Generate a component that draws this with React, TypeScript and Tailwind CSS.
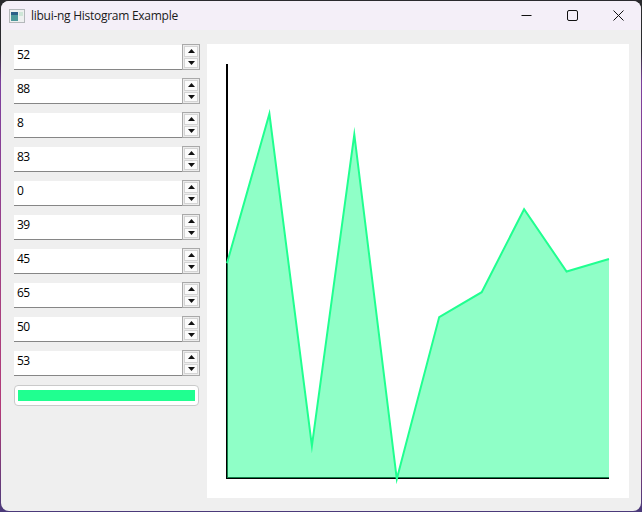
import React from 'react';

const VALUES = [52, 88, 8, 83, 0, 39, 45, 65, 50, 53];

// chart coordinates are local to the white panel (panel starts at 207,44)
const points = VALUES.map((v, i) => {
  const x = 20 + (i * 382) / 9;
  const y = 435 - v * 4.15;
  return `${x.toFixed(1)},${y.toFixed(1)}`;
});

function Arrow({ down }: { down?: boolean }) {
  return (
    <svg width="7" height="4" viewBox="0 0 7 4" className="block">
      <polygon points={down ? '0,0 7,0 3.5,4' : '3.5,0 7,4 0,4'} fill="#111" />
    </svg>
  );
}

function Spinner({ value }: { value: number }) {
  return (
    <div className="flex h-[26px]">
      <div className="flex-1 mt-px bg-white border-b border-[#868686] pl-[3px] text-[12px] tracking-[-0.7px] leading-[20px] text-black">
        {value}
      </div>
      <div className="w-[18px] border border-[#a9a9a9] bg-[#ececec] flex flex-col gap-px p-px">
        <button type="button" className="flex-1 flex items-center justify-center bg-[#fbfbfb] border border-[#d4d4d4]">
          <Arrow />
        </button>
        <button type="button" className="flex-1 flex items-center justify-center bg-[#fbfbfb] border border-[#d4d4d4]">
          <Arrow down />
        </button>
      </div>
    </div>
  );
}

function Histogram() {
  return (
    <svg width="422" height="454" viewBox="0 0 422 454" className="block">
      <path d="M20 20 V434 H402" fill="none" stroke="#000" strokeWidth="2" />
      <polygon points={`20,434 ${points.join(' ')} 402,434`} fill="#20ff90" fillOpacity="0.5" />
      <polyline points={points.join(' ')} fill="none" stroke="#20ff90" strokeWidth="2" strokeLinejoin="miter" strokeMiterlimit="20" />
    </svg>
  );
}

export default function App() {
  return (
    <div className="w-[642px] h-[512px] p-px bg-[linear-gradient(180deg,#2a2a2e_0%,#2a2a2e_10%,#7c3f9e_16%,#a8407f_60%,#b23a78_80%,#4a3a7a_100%)] font-['Open_Sans','Noto_Sans',sans-serif]">
      <div className="h-full rounded-lg overflow-hidden flex flex-col bg-[#efefef]">
        <header className="h-[29px] shrink-0 flex items-center bg-[#f4eff8]">
          <svg width="16" height="14" viewBox="0 0 16 14" className="ml-[8px] mt-px">
            <rect x="0.5" y="0.5" width="15" height="13" fill="#eef0f0" stroke="#b4b8bb" />
            <rect x="2" y="3" width="7" height="9" fill="#4f9a9c" />
            <rect x="2" y="3" width="7" height="3" fill="#2c5f88" />
            <rect x="10" y="3" width="4" height="4" fill="#cfe6d8" />
          </svg>
          <span className="ml-[6px] text-[12px] tracking-[-0.27px] text-[#1a1a1a] whitespace-nowrap">libui-ng Histogram Example</span>
          <div className="ml-auto flex items-center">
            <div className="w-[46px] h-[29px] flex items-center justify-center">
              <svg width="11" height="11" viewBox="0 0 11 11">
                <path d="M0.5 5.5H10.5" stroke="#111" fill="none" />
              </svg>
            </div>
            <div className="w-[46px] h-[29px] flex items-center justify-center">
              <svg width="11" height="11" viewBox="0 0 11 11">
                <rect x="0.5" y="0.5" width="10" height="10" rx="1.5" stroke="#111" fill="none" />
              </svg>
            </div>
            <div className="w-[46px] h-[29px] flex items-center justify-center">
              <svg width="11" height="11" viewBox="0 0 11 11">
                <path d="M0.5 0.5L10.5 10.5M10.5 0.5L0.5 10.5" stroke="#111" fill="none" />
              </svg>
            </div>
          </div>
        </header>
        <main className="flex-1 flex pl-[13px] pt-[14px]">
          <div className="w-[186px] flex flex-col gap-2">
            {VALUES.map((v, i) => (
              <Spinner key={i} value={v} />
            ))}
            <button
              type="button"
              className="mt-px w-[185px] h-[21px] rounded-[4px] border border-[#cacaca] bg-white px-[3px] py-[4px]"
            >
              <div className="h-full bg-[#20ff90]" />
            </button>
          </div>
          <div className="ml-[7px] w-[422px] h-[454px] bg-white">
            <Histogram />
          </div>
        </main>
      </div>
    </div>
  );
}
